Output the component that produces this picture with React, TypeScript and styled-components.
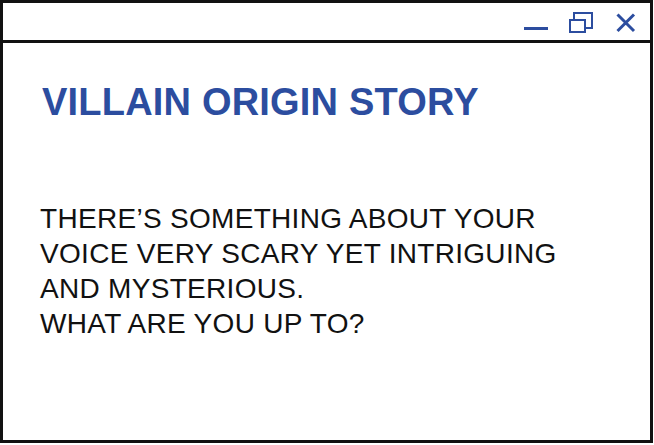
import React from "react";
import styled, { createGlobalStyle } from "styled-components";

const Global = createGlobalStyle`
  html, body { margin: 0; padding: 0; background: #ffffff; }
  body { font-family: "Liberation Sans", Arial, sans-serif; }
`;

const BLUE = "#2c4d9f";

const Window = styled.div`
  box-sizing: border-box;
  width: 653px;
  height: 443px;
  border: 3px solid #111111;
  background: #ffffff;
  display: flex;
  flex-direction: column;
`;

const TitleBar = styled.div`
  box-sizing: border-box;
  height: 40px;
  border-bottom: 3px solid #111111;
  display: flex;
  justify-content: flex-end;
  align-items: flex-start;
  gap: 21px;
  padding: 8px 12px 0 0;
`;

const Control = styled.svg`
  display: block;
  width: 24px;
  height: 24px;
  flex: none;
`;

const Body = styled.div`
  flex: 1;
  padding: 38px 37px 0 37px;
  display: flex;
  flex-direction: column;
`;

const Title = styled.h1`
  margin: 0 0 0 2px;
  font-family: "Liberation Sans", Arial, sans-serif;
  font-weight: 700;
  font-size: 38px;
  line-height: normal;
  color: ${BLUE};
  letter-spacing: 0.2px;
`;

const Message = styled.p`
  margin: 77px 0 0 0;
  font-family: "Liberation Sans", Arial, sans-serif;
  font-weight: 400;
  font-size: 28px;
  line-height: 35px;
  color: #111111;
  letter-spacing: 0.3px;
`;

export default function App() {
  return (
    <>
      <Global />
      <Window>
        <TitleBar>
          <Control viewBox="0 0 24 24" aria-label="minimize">
            <rect x="0" y="16" width="24" height="3" fill={BLUE} />
          </Control>
          <Control viewBox="0 0 24 24" aria-label="restore">
            <rect x="5" y="2" width="18" height="15" fill="none" stroke={BLUE} strokeWidth="2" />
            <rect x="1" y="9" width="15" height="12" fill="#ffffff" stroke={BLUE} strokeWidth="2" />
          </Control>
          <Control viewBox="0 0 24 24" aria-label="close">
            <path d="M3.5 3.5 L20 20 M20 3.5 L3.5 20" stroke={BLUE} strokeWidth="3" fill="none" />
          </Control>
        </TitleBar>
        <Body>
          <Title>VILLAIN ORIGIN STORY</Title>
          <Message>
            THERE’S SOMETHING ABOUT YOUR
            <br />
            VOICE VERY SCARY YET INTRIGUING
            <br />
            AND MYSTERIOUS.
            <br />
            WHAT ARE YOU UP TO?
          </Message>
        </Body>
      </Window>
    </>
  );
}
